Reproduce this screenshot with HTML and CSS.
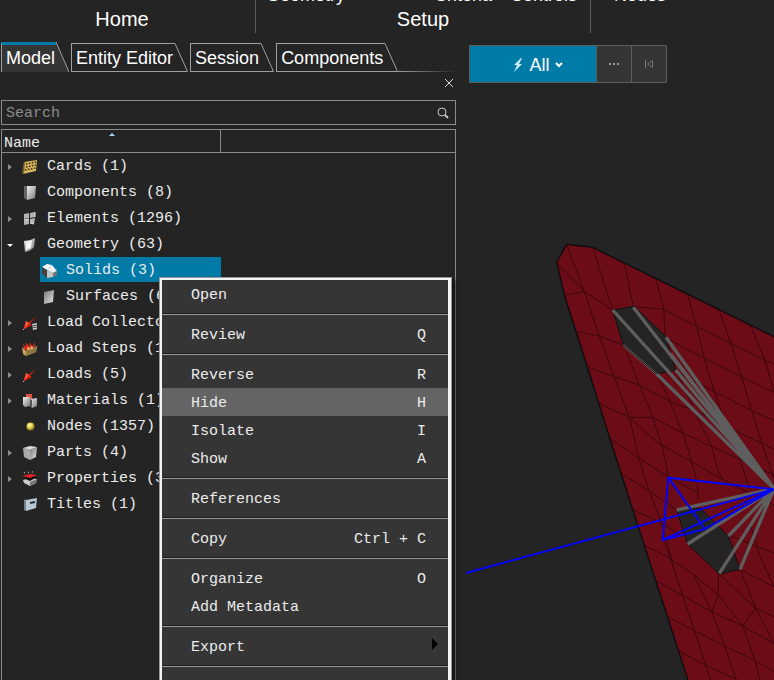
FILE: index.html
```html
<!DOCTYPE html>
<html lang="en">
<head>
<meta charset="utf-8">
<title>Model Browser</title>
<link rel="stylesheet" href="styles.css">
</head>
<body>
<svg class="defs" aria-hidden="true">
  <defs>
    <linearGradient id="metal" x1="0" x2="1" y1="0" y2="1"><stop offset="0" stop-color="#f2f2f2"/><stop offset="1" stop-color="#777"/></linearGradient>
    <linearGradient id="steel" x1="0" x2="1" y1="0" y2="1"><stop offset="0" stop-color="#777"/><stop offset="1" stop-color="#e4e4e4"/></linearGradient>
    <radialGradient id="gold" cx=".4" cy=".35" r=".7"><stop offset="0" stop-color="#fffbd0"/><stop offset=".4" stop-color="#e8d84a"/><stop offset="1" stop-color="#6e6010"/></radialGradient>
    <symbol id="arrow-right" viewBox="0 0 8 8"><path d="M2 1l4 3-4 3z" fill="#8c8c8c"/></symbol>
    <symbol id="arrow-down" viewBox="0 0 8 8"><path d="M1 3h6L4 6z" fill="#f4f4f4"/></symbol>
    <symbol id="load" viewBox="0 0 16 16"><path d="M14.500 1L8 8.500l2 1.500-8.500 4.500L4 6l3 1.500z" fill="#d8200f"/><path d="M4 6l3 2-5 6z" fill="#ff5a45"/><path d="M2 14l-1 1" stroke="#ccc"/></symbol>
  </defs>
</svg>

<header class="ribbon">
  <section class="group group-home">
    <div class="tools"></div>
    <h2>Home</h2>
  </section>
  <section class="group group-setup">
    <div class="tools"><span class="push">Geometry</span><span>Criteria</span><span>Controls</span></div>
    <h2>Setup</h2>
  </section>
  <section class="group group-next">
    <div class="tools"><span>Nodes</span></div>
  </section>
</header>

<main class="workspace">
  <aside class="browser">
    <div class="tabs" role="tablist">
      <button class="tab active" role="tab" aria-selected="true"><span>Model</span><svg viewBox="0 0 13 30"><path class="fill" d="M0 0L13 30H0z"/><path d="M0 0L13 30"/></svg></button>
      <button class="tab" role="tab"><span>Entity Editor</span><svg viewBox="0 0 13 29"><path d="M0 .5L12.500 28.500H0"/></svg></button>
      <button class="tab" role="tab"><span>Session</span><svg viewBox="0 0 13 29"><path d="M0 .5L12.500 28.500H0"/></svg></button>
      <button class="tab" role="tab"><span>Components</span><svg viewBox="0 0 13 29"><path d="M0 .5L12.500 28.500H0"/></svg></button>
      <i class="tail"></i>
    </div>
    <div class="closebar">
      <button class="close" aria-label="Close"><svg viewBox="0 0 10 10"><path d="M1 1l8 8M9 1L1 9"/></svg></button>
    </div>
    <form class="search">
      <input type="text" placeholder="Search" aria-label="Search">
      <button type="button" aria-label="Find"><svg viewBox="0 0 12 12"><circle cx="5" cy="5" r="4"/><path d="M8 8l3 3" stroke-width="2"/></svg></button>
    </form>
    <div class="tree">
      <div class="tree-head">
        <div class="col-name">Name<svg class="sort" viewBox="0 0 6 3"><path d="M0 3L3 0l3 3z" fill="#a8dcf0"/></svg></div>
      </div>
      <ul>
        <li><button class="row"><svg class="twisty"><use href="#arrow-right"/></svg><svg class="icon" viewBox="0 0 16 16"><path d="M2 3l13-2-1 11-13 3z" fill="#d2b25a"/><path d="M0 14L2 3l1 0-1 12z" fill="#7c6424"/><path d="M4 5l10-2M4 8l10-2M3 11l11-2" stroke="#3c2c08" stroke-width="1.500" stroke-dasharray="1.500 1.500"/><path d="M3 13l10-2" stroke="#f0dc90" stroke-dasharray="1 2"/></svg>Cards (1)</button></li>
        <li><button class="row"><svg class="twisty"></svg><svg class="icon" viewBox="0 0 16 16"><path d="M2 1h3v14l-3-2z" fill="#666"/><path d="M5 1h9l-1 12-8 2z" fill="url(#metal)"/></svg>Components (8)</button></li>
        <li><button class="row"><svg class="twisty"><use href="#arrow-right"/></svg><svg class="icon" viewBox="0 0 16 16"><path d="M2 3l5-1v5l-5 1zM8 2l5-1v5l-5 1zM2 9l5-1v5l-5 1zM8 8l5-1-1 6-4-1z" fill="#b4b4b4"/><path d="M2 9l5-1M8 12l4 1M13 1v5" stroke="#e4e4e4"/></svg>Elements (1296)</button></li>
        <li><button class="row"><svg class="twisty"><use href="#arrow-down"/></svg><svg class="icon" viewBox="0 0 16 16"><path d="M2 4q6 0 11-3l-1 9q-3 4-9 5z" fill="url(#metal)"/><path d="M4 5q4-1 6-2l-1 8-5 2z" fill="#f4f4f4"/></svg>Geometry (63)</button></li>
        <li class="child"><button class="row selected"><svg class="icon" viewBox="0 0 16 16"><path d="M1 4l5-3 5 1-5 5z" fill="#fff"/><path d="M1 4l5 3v8l-5-4z" fill="#444"/><path d="M6 7l5-5 5 6-4 2z" fill="#f0f0f0"/><path d="M6 7l6 3v4l-6 1z" fill="#c4c4c4"/><path d="M12 10l4-2v4l-4 2z" fill="#777"/></svg>Solids (3)</button></li>
        <li class="child"><button class="row"><svg class="icon" viewBox="0 0 16 16"><path d="M3 3l10-2-1 12-9 2z" fill="url(#steel)"/></svg>Surfaces (60)</button></li>
        <li><button class="row"><svg class="twisty"><use href="#arrow-right"/></svg><svg class="icon" viewBox="0 0 16 16"><use href="#load"/><path d="M10 9l5-1v6l-4 1z" fill="#ccc"/><path d="M10 11l5-1M10 13l5-1" stroke="#444"/></svg>Load Collectors (4)</button></li>
        <li><button class="row"><svg class="twisty"><use href="#arrow-right"/></svg><svg class="icon" viewBox="0 0 16 16"><path d="M2 8L1 3l3 3 0-5 3 5 1-5 2 5 3-5-1 7-4 3z" fill="#e02c1c"/><path d="M0 6l4 4 11-5-1 6-10 4-3-2z" fill="#c8a45c"/><path d="M4 10l11-5-1 6-10 4z" fill="#8e7842"/><path d="M5 9l1-4 2 3 2-4 1 4" fill="#f2b070"/></svg>Load Steps (1)</button></li>
        <li><button class="row"><svg class="twisty"><use href="#arrow-right"/></svg><svg class="icon"><use href="#load"/></svg>Loads (5)</button></li>
        <li><button class="row"><svg class="twisty"><use href="#arrow-right"/></svg><svg class="icon" viewBox="0 0 16 16"><path d="M4 1h6v6H4z" fill="#e05044"/><path d="M1 4l7 0v9l-5 1-2-2z" fill="url(#metal)"/><path d="M8 6l7-1v8l-5 2-2-2z" fill="url(#metal)"/><path d="M8 6l2 1v8l-2-2z" fill="#555"/></svg>Materials (1)</button></li>
        <li><button class="row"><svg class="twisty"></svg><svg class="icon" viewBox="0 0 16 16"><circle cx="8.500" cy="7.500" r="4" fill="url(#gold)"/></svg>Nodes (1357)</button></li>
        <li><button class="row"><svg class="twisty"><use href="#arrow-right"/></svg><svg class="icon" viewBox="0 0 16 16"><path d="M1 3l7-2 7 1-7 3z" fill="#ddd"/><path d="M1 3l7 2v10l-6-3z" fill="#aaa"/><path d="M8 5l7-3-1 10-6 3z" fill="url(#steel)"/></svg>Parts (4)</button></li>
        <li><button class="row"><svg class="twisty"><use href="#arrow-right"/></svg><svg class="icon" viewBox="0 0 16 16"><path d="M1 9l7-2 7 1-1 4-6 3-6-3z" fill="#ccc"/><path d="M8 11l7-3-1 4-6 3z" fill="#777"/><path d="M1 7l7-2 7 1-7 4z" fill="#111"/><path d="M0 5l8-2 7 1-7 3z" fill="#e02424"/><path d="M2 2l6-1 6 0" stroke="#ddd" stroke-dasharray="1 3" fill="none"/></svg>Properties (3)</button></li>
        <li><button class="row"><svg class="twisty"></svg><svg class="icon" viewBox="0 0 16 16"><path d="M2 3l2-1v12l-2-1z" fill="#75828c"/><path d="M4 3l11-2-1 10-10 3z" fill="#b9c8d2"/><path d="M8 6l5-1" stroke="#26323a" stroke-width="2"/></svg>Titles (1)</button></li>
      </ul>
    </div>

    <div class="menu" role="menu">
      <button role="menuitem">Open</button>
      <hr>
      <button role="menuitem">Review<kbd>Q</kbd></button>
      <hr>
      <button role="menuitem">Reverse<kbd>R</kbd></button>
      <button role="menuitem" class="hover">Hide<kbd>H</kbd></button>
      <button role="menuitem">Isolate<kbd>I</kbd></button>
      <button role="menuitem">Show<kbd>A</kbd></button>
      <hr>
      <button role="menuitem">References</button>
      <hr>
      <button role="menuitem">Copy<kbd>Ctrl + C</kbd></button>
      <hr>
      <button role="menuitem">Organize<kbd>O</kbd></button>
      <button role="menuitem">Add Metadata</button>
      <hr>
      <button role="menuitem">Export<svg class="more" viewBox="0 0 6 12"><path d="M0 0l6 6-6 6z"/></svg></button>
      <hr>
      <button role="menuitem">Delete<kbd>Del</kbd></button>
    </div>
  </aside>

  <section class="viewport">
    <svg class="scene" aria-label="Meshed bracket">
      <g transform="translate(84 196) scale(.33333)">
        <path class="part" d="M50 97L80 43L158 52L702 320L760 350V1400H460L230 690L142 411L73 195z"/>
        <g class="mesh">
          <path d="M80 43L133 185L178 318L222 440L268 562L298 690L327 782L365 880L400 1010L428 1097L465 1205L512 1352"/>
          <path d="M158 52L218 240M250 340L298 465L338 562L367 650L385 740M372 932L400 1010"/>
          <path d="M253 100L280 230M350 430L390 515L427 605L455 695L472 760L475 810M460 1033L515 1145L555 1250L590 1352"/>
          <path d="M348 148L372 238L375 320M407 420L460 535L515 650L535 725L550 750"/>
          <path d="M442 193L470 290L493 385L523 485L560 585L600 690L630 780"/>
          <path d="M537 240L573 340L605 440L635 542L665 640L702 745M632 288L675 390L702 485"/>
          <path d="M50 97L133 185L218 240M73 195L133 185M280 230L372 238L470 290L573 340L675 390L702 402"/>
          <path d="M107 304L178 318L250 345M380 325L493 385L605 440L702 487"/>
          <path d="M142 411L222 440L298 465L390 515L475 545L560 590L665 640L702 658"/>
          <path d="M407 425L523 485L635 542L702 572M177 520L268 562H338L427 608L515 650L600 688L702 735"/>
          <path d="M268 562L355 640L455 695L550 750L702 825M213 628L298 685L385 740L475 790"/>
          <path d="M245 732L327 782L410 840M278 838L365 880L430 920M310 945L372 975L460 1033L535 1095"/>
          <path d="M345 1050L428 1097L515 1145L608 1188L702 1240M380 1158L465 1203L555 1248L642 1290L702 1325M415 1263L495 1305L590 1348"/>
          <path d="M535 1030V1095L515 1145M535 1095L608 1188L645 1290L660 1350M535 1030L647 1135L702 1160M602 1020L647 1135L608 1188M647 1135L702 1240"/>
          <path d="M565 915L702 970M602 1020L702 1070M630 880L660 980L702 1070"/>
        </g>
        <path class="hole" d="M218 240L282 229L378 320L392 370L407 420L350 432L250 345z"/>
        <path class="hole" d="M410 840L482 835L565 918L600 1018L538 1032L443 942z"/>
        <g class="beam">
          <path d="M218 240L702 776M280 232L702 776M378 322L702 776M350 432L702 776M407 420L702 776M392 372L702 776"/>
          <path class="thin" d="M250 343L350 430M250 349L348 434"/>
          <path d="M410 840L702 776M443 942L702 776M565 918L702 776M538 1030L702 776M600 1018L702 776"/>
        </g>
        <path class="spring" d="M-222 1029L702 778L385 743L368 930L702 778L495 897L368 930M385 743L495 897"/>
      </g>
    </svg>
    <div class="selector">
      <button class="all"><svg class="bolt" viewBox="0 0 10 14"><path d="M8 0L1 7h3L1 14l8-8H6l3-6z" fill="#c8ecf8"/></svg>All<svg class="chev" viewBox="0 0 8 6"><path d="M1 1l3 3 3-3" fill="none" stroke="#fff" stroke-width="2"/></svg></button>
      <button aria-label="More"><svg class="small" viewBox="0 0 12 12"><path d="M1 5h2v2H1zM5 5h2v2H5zM9 5h2v2H9z" fill="#999"/></svg></button>
      <button aria-label="Previous"><svg class="small" viewBox="0 0 12 12"><path d="M2.500 2v8M9.500 2.500v7L4.500 6z" fill="none" stroke="#777"/></svg></button>
    </div>
  </section>
</main>
</body>
</html>
```
FILE: styles.css
```css
:root {
  --bg: #242424;
  --panel: #353535;
  --line: #8a8a8a;
  --blue: #007ba8;
  --text: #ececec;
  --mono: "Liberation Mono", monospace;
}

* { box-sizing: border-box; }

body {
  margin: 0;
  height: 100vh;
  display: flex;
  flex-direction: column;
  overflow: hidden;
  background: var(--bg);
  color: #fff;
  font-family: "Liberation Sans", sans-serif;
  font-size: 18px;
}

button {
  margin: 0;
  padding: 0;
  border: 0;
  background: none;
  color: inherit;
  font: inherit;
}

svg { display: block; flex: none; }
.defs { position: absolute; width: 0; height: 0; }

/* Ribbon, scrolled so that only the foot of the tool labels shows */
.ribbon {
  display: grid;
  grid-template-columns: 256px 335px 1fr;
  height: 34px;
  overflow: hidden;
}
.group { border-right: 1px solid #5c5c5c; margin-bottom: 1px; }
.group-next { border: 0; }
.tools {
  display: flex;
  gap: 18px;
  height: 20px;
  margin-top: -14px;
  line-height: 18px;
}
.push { margin-right: auto; }
.group-setup .tools { padding: 0 13px 0 10px; }
.group-next .tools { padding-left: 23px; }
.group h2 {
  margin: 0;
  font-size: 20px;
  font-weight: 400;
  line-height: 26px;
  text-align: center;
}
.group-home h2 { padding-right: 11px; }

.workspace { flex: 1; display: flex; min-height: 0; }

/* Browser panel */
.browser {
  position: relative;
  width: 456px;
  padding: 8px 0 0 1px;
  display: flex;
  flex-direction: column;
}
.tabs { display: flex; align-items: flex-end; gap: 2px; height: 30px; }
.tab { display: flex; height: 29px; }
.tab span {
  padding: 0 2px 0 4px;
  border: 1px solid #a0a0a0;
  border-right: 0;
  line-height: 29px;
}
.tab svg { width: 13px; height: 100%; fill: none; stroke: #a0a0a0; }
.tab.active { height: 30px; }
.tab.active span {
  padding-right: 1px;
  background: var(--panel);
  border-top: 3px solid var(--blue);
  border-bottom: 0;
  line-height: 26px;
}
.tab .fill { fill: var(--panel); stroke: none; }
.tail {
  flex: 1;
  height: 1px;
  margin-left: -2px;
  background: linear-gradient(90deg, #a0a0a0, transparent);
}

.closebar { display: flex; justify-content: flex-end; height: 28px; padding: 6px 2px 0; }
.close svg { width: 10px; height: 10px; stroke: #ddd; }
.close { height: 10px; }

.search {
  display: flex;
  align-items: center;
  height: 25px;
  margin-bottom: 4px;
  padding: 0 6px 0 4px;
  border: 1px solid var(--line);
}
.search input {
  flex: 1;
  min-width: 0;
  padding: 2px 0 0;
  border: 0;
  outline: 0;
  background: none;
  color: var(--text);
  font: 15px var(--mono);
}
.search input::placeholder { color: #8c8c8c; opacity: 1; }
.search svg { width: 12px; height: 12px; fill: none; stroke: #c8c8c8; }

.tree {
  flex: 1;
  min-height: 0;
  overflow: hidden;
  border: 1px solid var(--line);
  border-bottom: 0;
  color: var(--text);
  font: 15px/26px var(--mono);
}
.tree-head { height: 23px; border-bottom: 1px solid var(--line); }
.col-name {
  position: relative;
  width: 219px;
  height: 22px;
  padding-left: 2px;
  border-right: 1px solid var(--line);
  line-height: 28px;
}
.sort { position: absolute; top: 3px; left: 107px; width: 6px; height: 3px; }
.tree ul { margin: 0; padding: 0; list-style: none; }
.tree li { height: 26px; }
.row {
  display: flex;
  align-items: center;
  gap: 8px;
  height: 25px;
  padding: 2px 0 0 4px;
  white-space: nowrap;
}
.child { padding-left: 38px; }
.child .row { width: 181px; padding-left: 1px; }
.row.selected { background: var(--blue); }
.twisty { width: 8px; height: 8px; }
.icon { width: 16px; height: 16px; margin-right: 1px; }

/* Context menu, over the tree */
.menu {
  position: absolute;
  top: 244px;
  left: 160px;
  right: 5px;
  border: 2px solid #f4f4f4;
  border-right-width: 3px;
  outline: 1px solid #999;
  background: var(--panel);
  box-shadow: 3px 3px 4px 1px #111;
  color: var(--text);
  font: 15px/28px var(--mono);
}
.menu button {
  display: flex;
  align-items: center;
  width: 100%;
  height: 28px;
  padding: 4px 10px 0 29px;
}
.menu .hover { background: #646464; }
.menu kbd { margin: 0 12px 0 auto; font: inherit; }
.menu hr {
  height: 2px;
  margin: 5px 0;
  border: 0;
  border-top: 1px solid #1c1c1c;
  background: #999;
}
.more { width: 6px; height: 12px; margin: 0 0 8px auto; }

/* 3D view */
.viewport { position: relative; flex: 1; min-width: 0; padding: 11px 13px; }
.scene { position: absolute; inset: 0; width: 100%; height: 100%; }
.part { fill: #6c0c17; stroke: #0c0c0c; stroke-width: 4; }
.mesh { fill: none; stroke: #3c060c; stroke-width: 3; }
.hole { fill: var(--bg); stroke: #111; stroke-width: 3; }
.beam { fill: none; stroke: #5e5e5e; stroke-width: 10; }
.beam .thin { stroke-width: 3; }
.spring { fill: none; stroke: #0404f4; stroke-width: 6; }

.selector {
  position: relative;
  display: inline-flex;
  gap: 1px;
  padding: 1px;
  border-radius: 1px;
  background: #5e5e5e;
}
.selector button {
  display: flex;
  align-items: center;
  justify-content: center;
  width: 34px;
  height: 36px;
  background: var(--panel);
}
.selector .all { width: 126px; gap: 6px; padding: 2px 0 0 10px; background: var(--blue); }
.bolt { width: 10px; height: 14px; }
.chev { width: 8px; height: 6px; margin-left: -1px; }
.small { width: 12px; height: 12px; }
```
